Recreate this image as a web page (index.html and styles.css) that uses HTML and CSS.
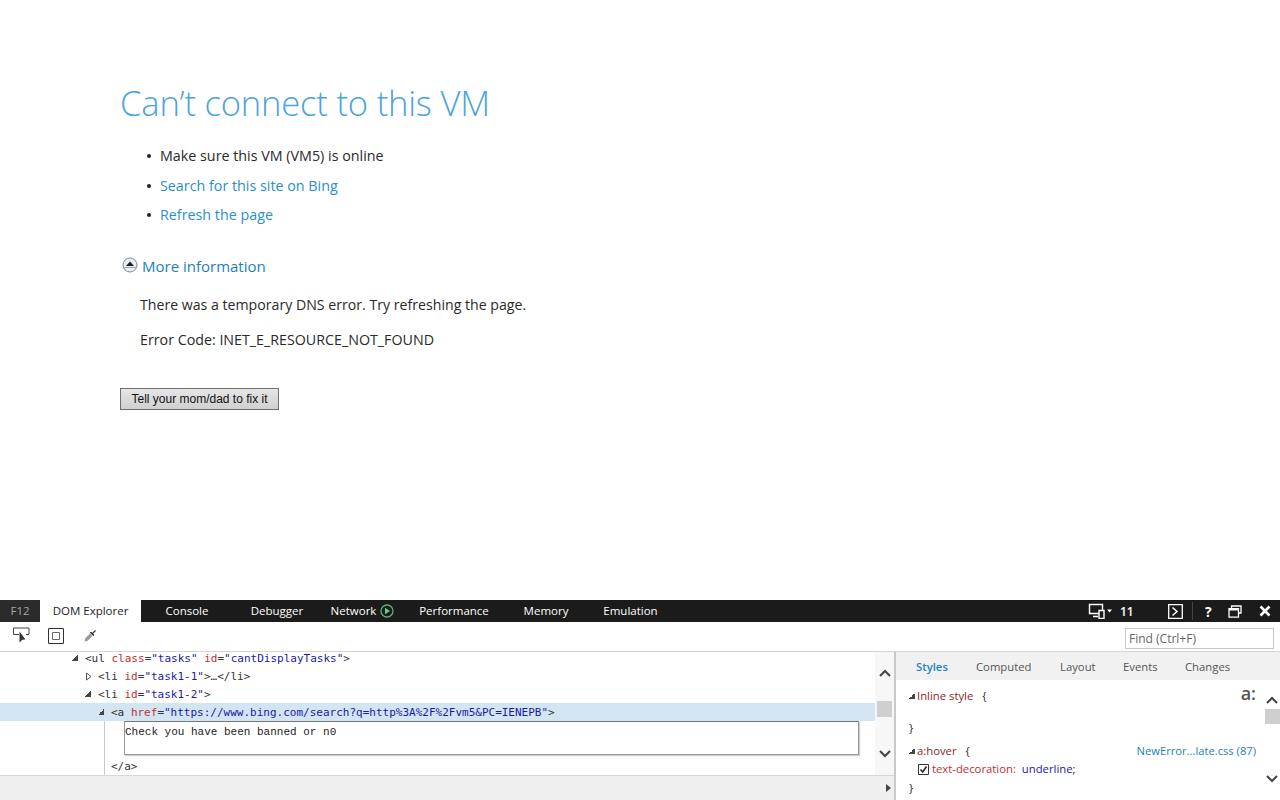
FILE: index.html
```html
<!DOCTYPE html>
<html lang="en">
<head>
<meta charset="utf-8">
<title>Can't connect to this VM</title>
<link rel="stylesheet" href="styles.css">
</head>
<body>
<main class="page">
  <h1 class="title">Can’t connect to this VM</h1>
  <ul class="tasks">
    <li>Make sure this VM (VM5) is online</li>
    <li><a href="#">Search for this site on Bing</a></li>
    <li><a href="#">Refresh the page</a></li>
  </ul>
  <div class="more">
    <svg class="more-icon" width="16" height="16" viewBox="0 0 16 16"><circle cx="8" cy="8" r="7" fill="#e9eef2" stroke="#7f8c96"/><path d="M8 4.500 12 9H4z" fill="#1d1d1d"/><path d="M2 10.500h12" stroke="#9aa6b0"/></svg>
    <a href="#">More information</a>
  </div>
  <p class="info first">There was a temporary DNS error. Try refreshing the page.</p>
  <p class="info second">Error Code: INET_E_RESOURCE_NOT_FOUND</p>
  <button class="fix" type="button">Tell your mom/dad to fix it</button>
</main>

<section class="devtools">
  <div class="topbar">
    <nav class="tabs">
      <span class="tab f12">F12</span>
      <span class="tab active">DOM Explorer</span>
      <span class="tab">Console</span>
      <span class="tab">Debugger</span>
      <span class="tab">Network
        <svg class="play" width="14" height="14" viewBox="0 0 14 14"><circle cx="7" cy="7" r="6" fill="none" stroke="#5fae7a" stroke-width="1.300"/><path d="M5 3.800 10 7 5 10.200z" fill="#5fd08a"/></svg>
      </span>
      <span class="tab">Performance</span>
      <span class="tab">Memory</span>
      <span class="tab">Emulation</span>
    </nav>
    <div class="topicons">
      <svg width="24" height="16" viewBox="0 0 24 16"><path d="M1.500 1.500h13v9h-13zM5 13.500h5" fill="none" stroke="#fff" stroke-width="1.400"/><path d="M11 7.500h5v8h-5z" fill="#1b1b1b" stroke="#fff" stroke-width="1.400"/><path d="M19 6.500h5l-2.500 3z" fill="#fff"/></svg>
      <span class="mode">11</span>
      <svg class="console-icon" width="15" height="15" viewBox="0 0 15 15"><path d="M.7.7h13.600v13.600H.7z" fill="none" stroke="#fff" stroke-width="1.300"/><path d="M4.500 3.500 9 7.500l-4.500 4" fill="none" stroke="#fff" stroke-width="1.500"/></svg>
      <span class="sep"></span>
      <span class="help">?</span>
      <svg class="undock" width="14" height="13" viewBox="0 0 14 13"><path d="M3.500 3V1h9.500v7h-2.500" fill="none" stroke="#fff" stroke-width="1.300"/><path d="M1 3.600h9.500v8.500H1z" fill="none" stroke="#fff" stroke-width="1.300"/><path d="M1 4.500h9.500" stroke="#fff" stroke-width="2"/></svg>
      <svg class="close" width="12" height="12" viewBox="0 0 12 12"><path d="M1.500 1.500l9 9M10.500 1.500l-9 9" stroke="#fff" stroke-width="2.600"/></svg>
    </div>
  </div>
  <div class="toolbar">
    <div class="tools">
      <svg width="18" height="17" viewBox="0 0 18 17"><path d="M6 7.500H.5V1h15.500v6.500h-3" fill="none" stroke="#444"/><path d="M6.500 4.500v11l2.800-2.800 3.200-.2z" fill="#333"/></svg>
      <svg width="16" height="16" viewBox="0 0 16 16"><path d="M.5.500h15v15H.5z" fill="none" stroke="#333"/><path d="M4.500 4.500h7v7h-7z" fill="none" stroke="#666"/></svg>
      <svg class="dropper" width="13" height="13" viewBox="0 0 13 13"><path d="M.5 12.500l.8-3.200L6 4.600 8.400 7l-4.700 4.700z" fill="#9a9a9a"/><path d="M5.800 3.600 7 2.800l1.500 1 2-2.300c1-.6 1.600 0 1 1L9.200 4.500l1 1.500-.8 1.200z" fill="#333"/></svg>
    </div>
    <div class="find">Find (Ctrl+F)</div>
  </div>
  <div class="panes">
    <div class="left">
      <div class="tree-wrap">
        <div class="tree">
          <div class="row ind1"><i class="arrow open"></i><span class="code"><span class="tag">&lt;ul</span> <span class="attr">class</span><span class="tag">=</span><span class="val">"tasks"</span> <span class="attr">id</span><span class="tag">=</span><span class="val">"cantDisplayTasks"</span><span class="tag">&gt;</span></span></div>
          <div class="row ind2"><svg class="arrow closed" width="6" height="9" viewBox="0 0 6 9"><path d="M.5 1v7l4.500-3.500z" fill="#fff" stroke="#555"/></svg><span class="code"><span class="tag">&lt;li</span> <span class="attr">id</span><span class="tag">=</span><span class="val">"task1-1"</span><span class="tag">&gt;…&lt;/li&gt;</span></span></div>
          <div class="row ind2"><i class="arrow open"></i><span class="code"><span class="tag">&lt;li</span> <span class="attr">id</span><span class="tag">=</span><span class="val">"task1-2"</span><span class="tag">&gt;</span></span></div>
          <div class="row ind3 selected"><i class="arrow open"></i><span class="code"><span class="tag">&lt;a</span> <span class="attr">href</span><span class="tag">=</span><span class="val">"https://www.bing.com/search?q=http%3A%2F%2Fvm5&amp;PC=IENEPB"</span><span class="tag">&gt;</span></span></div>
          <div class="guide">
            <div class="editbox">Check you have been banned or n0</div>
            <div class="row closing"><span class="tag">&lt;/a&gt;</span></div>
          </div>
        </div>
        <div class="vscroll">
          <svg width="12" height="8" viewBox="0 0 12 8"><path d="M1 7 6 2l5 5" fill="none" stroke="#444" stroke-width="2"/></svg>
          <span class="thumb"></span>
          <svg width="12" height="8" viewBox="0 0 12 8"><path d="M1 1l5 5 5-5" fill="none" stroke="#444" stroke-width="2"/></svg>
        </div>
      </div>
      <div class="footer"><i class="arrow small"></i></div>
    </div>
    <div class="right">
      <div class="subtabs">
        <span class="subtab on">Styles</span>
        <span class="subtab">Computed</span>
        <span class="subtab">Layout</span>
        <span class="subtab">Events</span>
        <span class="subtab">Changes</span>
      </div>
      <div class="stylebody">
        <div class="rules">
          <div class="rule-head"><span class="sel"><i class="mini"></i>Inline style</span><span class="brace">{</span><span class="pseudo">a:</span></div>
          <div class="blank"></div>
          <div class="end">}</div>
          <div class="rule-head second-rule"><span class="sel"><i class="mini"></i>a:hover</span><span class="brace">{</span><a class="src" href="#">NewError...late.css (87)</a></div>
          <div class="decl"><i class="check"><svg width="11" height="11" viewBox="0 0 11 11"><path d="M.5.500h10v10H.5z" fill="#fff" stroke="#333"/><path d="M2.500 5.500 4.700 8 8.500 2.500" fill="none" stroke="#222" stroke-width="1.500"/></svg></i><span class="decl-text"><span class="prop">text-decoration:</span> <span class="pval">underline</span>;</span></div>
          <div class="end">}</div>
        </div>
        <div class="vscroll slim">
          <svg width="12" height="8" viewBox="0 0 12 8"><path d="M1 7 6 2l5 5" fill="none" stroke="#444" stroke-width="2"/></svg>
          <span class="thumb"></span>
          <svg width="12" height="8" viewBox="0 0 12 8"><path d="M1 1l5 5 5-5" fill="none" stroke="#444" stroke-width="2"/></svg>
        </div>
      </div>
    </div>
  </div>
</section>
</body>
</html>
```
FILE: styles.css
```css
* { box-sizing: border-box; }
html, body { margin: 0; height: 100%; }
body {
  width: 1280px;
  height: 800px;
  overflow: hidden;
  background: #fff;
  display: flex;
  flex-direction: column;
  font-family: "Open Sans", "Noto Sans", sans-serif;
  color: #2a2a2a;
}
a { color: #2a8fcf; text-decoration: none; }

.page { height: 600px; padding: 81px 0 0 120px; flex: none; }
.title {
  margin: 0;
  font-size: 34.600px;
  line-height: 44px;
  font-weight: 300;
  color: #4aa3df;
  letter-spacing: -.2px;
}
.tasks {
  list-style: none;
  margin: 21px 0 0;
  padding: 0 0 0 27px;
  font-size: 14.300px;
  line-height: 20px;
}
.tasks li { position: relative; padding-left: 13px; margin-bottom: 9.500px; }
.tasks li::before {
  content: "";
  position: absolute;
  left: 0;
  top: 8px;
  width: 4px;
  height: 4px;
  border-radius: 50%;
  background: #222;
}
.more { display: flex; align-items: center; gap: 4px; margin: 30px 0 0 2px; font-size: 15px; line-height: 22px; height: 22px; }
.more a { color: #1d7fb8; }
.more-icon { margin-top: -3px; }
.info { margin: 0 0 0 20px; font-size: 14.150px; line-height: 20px; }
.info.first { margin-top: 18px; }
.info.second { margin-top: 15px; font-size: 14.250px; }
.fix {
  display: block;
  margin-top: 38px;
  width: 159px;
  height: 22px;
  padding: 0;
  border: 1px solid #6f6f6f;
  border-radius: 0;
  background: linear-gradient(#e6e6e6, #d0d0d0);
  font: 12px "Liberation Sans", Arial, sans-serif;
  color: #111;
}

.devtools { flex: 1; display: flex; flex-direction: column; min-height: 0; }
.topbar {
  height: 22px;
  background: #1b1b1b;
  display: flex;
  justify-content: space-between;
  color: #fff;
  font-size: 11.500px;
  flex: none;
}
.tabs {
  display: grid;
  grid-template-columns: 40px 101px 92px 88px 83px 100px 84px 85px;
}
.tab { display: flex; align-items: center; justify-content: center; gap: 4px; line-height: 22px; white-space: nowrap; }
.tab.f12 { background: #2b2b2b; color: #a5a5a5; }
.tab.active { background: #fff; color: #222; }
.topicons { display: flex; align-items: center; padding-right: 9px; }
.mode { margin-left: 8px; width: 14px; font-size: 12px; font-weight: 600; }
.console-icon { margin-left: 34px; }
.sep { width: 1px; height: 18px; background: #444; margin-left: 9px; }
.help { margin-left: 12px; width: 8px; font-weight: 700; font-size: 14px; }
.undock { margin-left: 15px; }
.close { margin-left: 17px; }

.toolbar {
  height: 30px;
  flex: none;
  display: flex;
  justify-content: space-between;
  align-items: center;
  border-bottom: 1px solid #d6d6d6;
  padding: 2px 6px 2px 13px;
}
.tools { display: flex; align-items: center; gap: 17px; margin-bottom: 2px; }
.tools .dropper { margin-left: 3px; }
.find {
  width: 149px;
  height: 21px;
  border: 1px solid #c8c8c8;
  font-size: 12px;
  line-height: 19px;
  padding-left: 3px;
  color: #666;
  margin-top: 3px;
}

.panes { flex: 1; display: flex; min-height: 0; }
.left { width: 894px; display: flex; flex-direction: column; flex: none; }
.tree-wrap { height: 123px; display: flex; flex: none; overflow: hidden; }
.tree { width: 875px; margin-top: -3px; font: 11px/18px "DejaVu Sans Mono", monospace; color: #333; }
.row { height: 18px; display: flex; align-items: center; white-space: pre; }
.code { padding-top: 2px; }
.ind1 { padding-left: 72px; }
.ind2 { padding-left: 85px; }
.ind3 { padding-left: 98px; }
.selected { background: #d3e5f2; }
.arrow { display: block; flex: none; margin-right: 7px; }
.arrow.open { width: 6px; height: 6px; background: linear-gradient(135deg, transparent 50%, #444 50%); }
.arrow.closed { margin-left: 1px; margin-right: 6px; }
.tag { color: #333; }
.attr { color: #c03030; }
.val { color: #1a1aa8; }
.guide { margin-left: 104px; border-left: 1px solid #c8c8c8; height: 54px; }
.editbox {
  margin-left: 19px;
  width: 735px;
  height: 34px;
  padding-top: 1px;
  border: 1px solid #9a9a9a;
  border-top-color: #777;
  box-shadow: 1px 1px 1px #ccc;
  font: 11px/18px "Liberation Mono", monospace;
  color: #222;
}
.closing { padding: 2px 0 0 6px; height: 20px; margin-top: 1px; }
.vscroll {
  width: 19px;
  flex: none;
  background: #f7f7f7;
  display: flex;
  flex-direction: column;
  align-items: center;
  padding-top: 17px;
}
.vscroll .thumb { width: 15px; height: 16px; background: #cfcfcf; margin-top: 24px; margin-bottom: 33px; }
.footer {
  flex: 1;
  background: #efefef;
  border-top: 1px solid #d6d6d6;
  display: flex;
  justify-content: flex-end;
  align-items: center;
  padding-right: 3px;
}
.arrow.small { width: 0; height: 0; border-left: 5px solid #444; border-top: 4px solid transparent; border-bottom: 4px solid transparent; margin: 0; }

.right { flex: 1; border-left: 2px solid #c9c9c9; display: flex; flex-direction: column; min-width: 0; }
.subtabs {
  height: 28px;
  background: #f1f1f1;
  display: grid;
  grid-template-columns: 60px 84px 63px 62px 1fr;
  padding-left: 20px;
  font-size: 11.300px;
  line-height: 29px;
  color: #555;
  flex: none;
}
.subtab.on { color: #1d84c4; font-weight: 600; }
.stylebody { flex: 1; display: flex; min-height: 0; }
.rules { width: 368px; padding: 7px 8px 0 13px; font-size: 11.300px; line-height: 18px; flex: none; }
.rule-head { display: flex; height: 18px; }
.sel { color: #8a1f2a; position: relative; padding-left: 8px; }
.mini { position: absolute; left: 0; top: 6px; width: 6px; height: 6px; background: linear-gradient(135deg, transparent 50%, #444 50%); }
.brace { margin-left: 9px; }
.pseudo { margin-left: auto; margin-top: -3px; font-size: 18px; font-weight: 600; color: #555; }
.blank { height: 13px; }
.end { height: 18px; padding-top: 1px; }
.second-rule { margin-top: 6px; }
.src { margin-left: auto; color: #1d7fb5; font-size: 11.200px; }
.decl { padding-left: 9px; display: flex; gap: 3px; align-items: center; height: 18px; white-space: pre; }
.check { display: block; height: 11px; line-height: 0; }
.prop { color: #c03030; }
.pval { color: #1a1aa8; margin-left: 3px; }
.vscroll.slim { background: #fff; width: 16px; padding-top: 16px; }
.vscroll.slim .thumb { margin-top: 5px; margin-bottom: 51px; height: 15px; }
```
